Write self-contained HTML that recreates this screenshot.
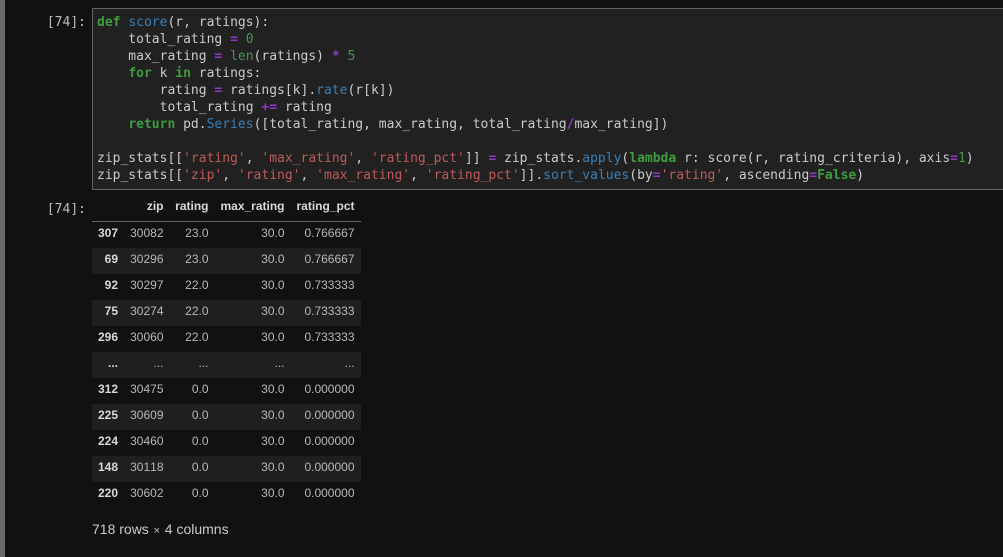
<!DOCTYPE html>
<html><head><meta charset="utf-8">
<style>
html,body{margin:0;padding:0;background:#111;width:1003px;height:557px;overflow:hidden}
#bar{position:absolute;left:0;top:0;width:5px;height:557px;background:#6a6a6a}
.prompt{position:absolute;left:39px;width:47px;text-align:right;font:13px/17px "DejaVu Sans Mono","Liberation Mono",monospace;color:#bdbdbd}
#cell{position:absolute;left:92px;top:8px;width:920px;height:180px;background:#212121;border:1px solid #646464;box-sizing:content-box}
pre{position:absolute;left:4px;top:4.5px;margin:0;font:13px/17px "DejaVu Sans Mono","Liberation Mono",monospace;color:#cacaca;white-space:pre}
.k{color:#3f9c3f;font-weight:bold}.f{color:#3a7fb5}.o{color:#9238c8;font-weight:bold}.n{color:#4a944a}.b{color:#4a944a}.s{color:#bd5a5a}
#hr{position:absolute;left:92px;top:221px;width:269px;height:1px;background:#666}
.row{position:absolute;left:92px;width:269px;height:26px;font:12px/26px "Liberation Sans",Arial,sans-serif;color:#b8b8b8;font-kerning:none}
.row.st{background:#1f1f1f}
.row span{position:absolute;top:0;text-align:right;white-space:nowrap}
.row .a{left:0;width:26px;font-weight:bold;color:#d8d8d8}
.row .c1{left:30px;width:41.5px}
.row .c2{left:80px;width:36.5px}
.row .c3{left:120px;width:72.5px}
.row .c4{left:200px;width:62.5px}
.hd span{font-weight:bold;color:#d8d8d8}
#foot{position:absolute;left:92px;top:520px;font:14px/18px "Liberation Sans",Arial,sans-serif;color:#cacaca;white-space:nowrap}
#foot i{font-style:normal;font-size:11px;display:inline-block;width:8.2px;text-align:center}
</style></head><body>
<div id="bar"></div>
<div class="prompt" style="top:13.5px">[74]:</div>
<div id="cell"><pre><span class="k">def</span> <span class="f">score</span>(r, ratings):
    total_rating <span class="o">=</span> <span class="n">0</span>
    max_rating <span class="o">=</span> <span class="b">len</span>(ratings) <span class="o">*</span> <span class="n">5</span>
    <span class="k">for</span> k <span class="k">in</span> ratings:
        rating <span class="o">=</span> ratings[k].<span class="f">rate</span>(r[k])
        total_rating <span class="o">+=</span> rating
    <span class="k">return</span> pd.<span class="f">Series</span>([total_rating, max_rating, total_rating<span class="o">/</span>max_rating])

zip_stats[[<span class="s">'rating'</span>, <span class="s">'max_rating'</span>, <span class="s">'rating_pct'</span>]] <span class="o">=</span> zip_stats.<span class="f">apply</span>(<span class="k">lambda</span> r: score(r, rating_criteria), axis<span class="o">=</span><span class="n">1</span>)
zip_stats[[<span class="s">'zip'</span>, <span class="s">'rating'</span>, <span class="s">'max_rating'</span>, <span class="s">'rating_pct'</span>]].<span class="f">sort_values</span>(by<span class="o">=</span><span class="s">'rating'</span>, ascending<span class="o">=</span><span class="k">False</span>)</pre></div>
<div class="prompt" style="top:200.5px">[74]:</div>
<div class="row hd" style="top:193px"><span class="c1">zip</span><span class="c2">rating</span><span class="c3">max_rating</span><span class="c4">rating_pct</span></div>
<div id="hr"></div>
<div class="row" style="top:220px"><span class="a">307</span><span class="c1">30082</span><span class="c2">23.0</span><span class="c3">30.0</span><span class="c4">0.766667</span></div>
<div class="row st" style="top:248px"><span class="a" style="top:-2px">69</span><span class="c1" style="top:-2px">30296</span><span class="c2" style="top:-2px">23.0</span><span class="c3" style="top:-2px">30.0</span><span class="c4" style="top:-2px">0.766667</span></div>
<div class="row" style="top:272px"><span class="a">92</span><span class="c1">30297</span><span class="c2">22.0</span><span class="c3">30.0</span><span class="c4">0.733333</span></div>
<div class="row st" style="top:300px"><span class="a" style="top:-2px">75</span><span class="c1" style="top:-2px">30274</span><span class="c2" style="top:-2px">22.0</span><span class="c3" style="top:-2px">30.0</span><span class="c4" style="top:-2px">0.733333</span></div>
<div class="row" style="top:324px"><span class="a">296</span><span class="c1">30060</span><span class="c2">22.0</span><span class="c3">30.0</span><span class="c4">0.733333</span></div>
<div class="row st" style="top:352px"><span class="a" style="top:-2px">...</span><span class="c1" style="top:-2px">...</span><span class="c2" style="top:-2px">...</span><span class="c3" style="top:-2px">...</span><span class="c4" style="top:-2px">...</span></div>
<div class="row" style="top:376px"><span class="a">312</span><span class="c1">30475</span><span class="c2">0.0</span><span class="c3">30.0</span><span class="c4">0.000000</span></div>
<div class="row st" style="top:404px"><span class="a" style="top:-2px">225</span><span class="c1" style="top:-2px">30609</span><span class="c2" style="top:-2px">0.0</span><span class="c3" style="top:-2px">30.0</span><span class="c4" style="top:-2px">0.000000</span></div>
<div class="row" style="top:428px"><span class="a">224</span><span class="c1">30460</span><span class="c2">0.0</span><span class="c3">30.0</span><span class="c4">0.000000</span></div>
<div class="row st" style="top:456px"><span class="a" style="top:-2px">148</span><span class="c1" style="top:-2px">30118</span><span class="c2" style="top:-2px">0.0</span><span class="c3" style="top:-2px">30.0</span><span class="c4" style="top:-2px">0.000000</span></div>
<div class="row" style="top:480px"><span class="a">220</span><span class="c1">30602</span><span class="c2">0.0</span><span class="c3">30.0</span><span class="c4">0.000000</span></div>
<div id="foot">718 rows <i>×</i> 4 columns</div>
</body></html>
